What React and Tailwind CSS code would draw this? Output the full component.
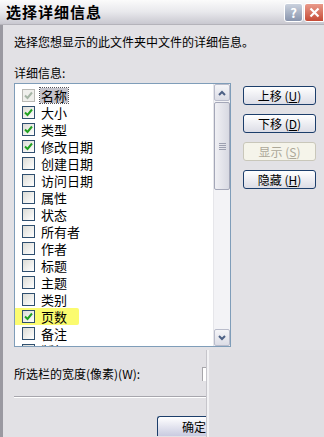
const items = [
  { label: '名称', checked: true, disabled: true, selected: true },
  { label: '大小', checked: true },
  { label: '类型', checked: true },
  { label: '修改日期', checked: true },
  { label: '创建日期' },
  { label: '访问日期' },
  { label: '属性' },
  { label: '状态' },
  { label: '所有者' },
  { label: '作者' },
  { label: '标题' },
  { label: '主题' },
  { label: '类别' },
  { label: '页数', checked: true, marked: true },
  { label: '备注' },
  { label: '版权' },
];

function Check({ checked, disabled }) {
  return (
    <span
      className={`w-[13px] h-[13px] shrink-0 border flex items-center justify-center ${
        disabled ? 'border-[#b9b9b5] bg-[#efefec]' : 'border-[#2f4f6f] bg-gradient-to-br from-[#dcdcd6] to-white'
      }`}
    >
      {checked && (
        <svg width="9" height="9" viewBox="0 0 9 9">
          <path d="M1 4.5 L3.5 7 L8 1.5" fill="none" stroke={disabled ? '#a6b5a6' : '#21a121'} strokeWidth="2" />
        </svg>
      )}
    </span>
  );
}

function XpButton({ label, hotkey, disabled }) {
  return (
    <button
      className={`w-[73px] h-[19px] rounded-[3px] border text-[12px] leading-[14px] flex items-center justify-center ${
        disabled
          ? 'border-[#c9c7ba] bg-[#f5f4ea] text-[#aca899]'
          : 'border-[#1c3e6b] bg-gradient-to-b from-white to-[#dcdde6] text-black'
      }`}
    >
      <span className="inline-block h-[14px]">
        {label} (<span className="underline">{hotkey}</span>)
      </span>
    </button>
  );
}

export default function App() {
  return (
    <div
      className="w-[324px] h-[437px] overflow-hidden relative bg-[#e2e1e5] text-black"
      style={{ fontFamily: '"Noto Sans CJK SC", "Noto Sans", sans-serif' }}
    >
      {/* title bar */}
      <div className="h-[25px] flex items-center justify-between bg-gradient-to-b from-[#fbfbfb] via-[#e8e8ec] to-[#c9c8d0] border-b border-[#b4b3ba]">
        <span className="pl-[6px] text-[15px] font-bold tracking-[1px] inline-block h-[20px] leading-[20px]">选择详细信息</span>
        <div className="flex gap-[1px] pt-[1px]">
          <span className="w-[19px] h-[19px] rounded-[3px] border border-white bg-gradient-to-b from-[#cbd2de] to-[#8995ad] text-white text-[13px] font-bold flex items-center justify-center leading-none">
            ?
          </span>
          <span className="w-[20px] h-[19px] rounded-l-[3px] border border-white bg-gradient-to-b from-[#e99a8a] to-[#c54a36] flex items-center justify-center">
            <svg width="11" height="11" viewBox="0 0 11 11">
              <path d="M1.5 1.5 L9.5 9.5 M9.5 1.5 L1.5 9.5" stroke="#fff" strokeWidth="2.2" />
            </svg>
          </span>
        </div>
      </div>

      {/* body */}
      <div className="border-l-[3px] border-[#9a99a1] h-[412px] pl-[11px]">
        <p className="pt-[9px] text-[12px] leading-[16px]">选择您想显示的此文件夹中文件的详细信息。</p>
        <p className="mt-[15px] text-[12px] leading-[16px]">详细信息:</p>

        <div className="flex mt-[2px]">
          {/* list */}
          <div className="w-[217px] h-[264px] border border-[#7f9db9] bg-white flex overflow-hidden">
            <ul className="flex-1 pt-[3px] pl-[7px]">
              {items.map((it) => (
                <li
                  key={it.label}
                  className={`h-[17px] flex items-center gap-[5px] ${
                    it.marked ? 'bg-[#fbfb6f] -ml-[17px] pl-[17px] mr-[134px] rounded-[2px]' : ''
                  }`}
                >
                  <Check checked={it.checked} disabled={it.disabled} />
                  <span
                    className={`inline-block h-[15px] text-[13px] leading-[15px] px-[1px] ${
                      it.selected ? 'bg-[#c4c3ca] outline-1 outline-dotted outline-[#55545c]' : ''
                    }`}
                  >
                    {it.label}
                  </span>
                </li>
              ))}
            </ul>
            {/* scrollbar */}
            <div className="w-[17px] bg-[#f3f3f6] border-l border-[#e6e6ea] flex flex-col">
              <div className="h-[17px] rounded-[2px] border border-[#b9bccb] bg-gradient-to-b from-[#f5f5f8] to-[#dcdde6] flex items-center justify-center">
                <svg width="8" height="6" viewBox="0 0 8 6">
                  <path d="M1 5 L4 2 L7 5" fill="none" stroke="#4d6185" strokeWidth="2" />
                </svg>
              </div>
              <div className="h-[88px] mt-[1px] rounded-[2px] border border-[#a4a7b8] bg-gradient-to-r from-[#f0f0f4] to-[#d8d9e2] flex items-center justify-center">
                <svg width="7" height="8" viewBox="0 0 7 8">
                  <path d="M0 1.5 H7 M0 3.5 H7 M0 5.5 H7 M0 7.5 H7" stroke="#9da0b0" strokeWidth="1" />
                </svg>
              </div>
              <div className="flex-1" />
              <div className="h-[17px] rounded-[2px] border border-[#b9bccb] bg-gradient-to-b from-[#f5f5f8] to-[#dcdde6] flex items-center justify-center">
                <svg width="8" height="6" viewBox="0 0 8 6">
                  <path d="M1 1 L4 4 L7 1" fill="none" stroke="#4d6185" strokeWidth="2" />
                </svg>
              </div>
            </div>
          </div>

          {/* buttons */}
          <div className="ml-[12px] pt-[3px] flex flex-col gap-[9px]">
            <XpButton label="上移" hotkey="U" />
            <XpButton label="下移" hotkey="D" />
            <XpButton label="显示" hotkey="S" disabled />
            <XpButton label="隐藏" hotkey="H" />
          </div>
        </div>

        <div className="flex items-center mt-[19px] w-[196px] justify-between">
          <span className="inline-block h-[16px] text-[12px] leading-[16px]">所选栏的宽度(像素)(W):</span>
          <span className="w-[8px] h-[14px] bg-white border-l border-t border-[#a7a6aa]" />
        </div>
        <div className="mt-[14px] w-[193px] h-[2px] border-t border-[#a7a6ad] border-b border-b-white" />
        <div className="mt-[18px] w-[193px] flex justify-end">
          <span className="w-[50px] h-[20px] rounded-tl-[3px] border-l border-t border-[#1c3e6b] bg-gradient-to-b from-white to-[#c9cbe0] text-[12px] leading-[16px] flex items-center justify-end pr-[1px]">
            确定
          </span>
        </div>
      </div>

      {/* spliced-in cut-off region of the screenshot */}
      <div className="absolute left-[207px] top-[350px] right-0 bottom-0 bg-[#e0dfe3] border-l-[2px] border-[#f2f2f4] shadow-[-1px_0_0_#c6c5cb]" />
    </div>
  );
}
